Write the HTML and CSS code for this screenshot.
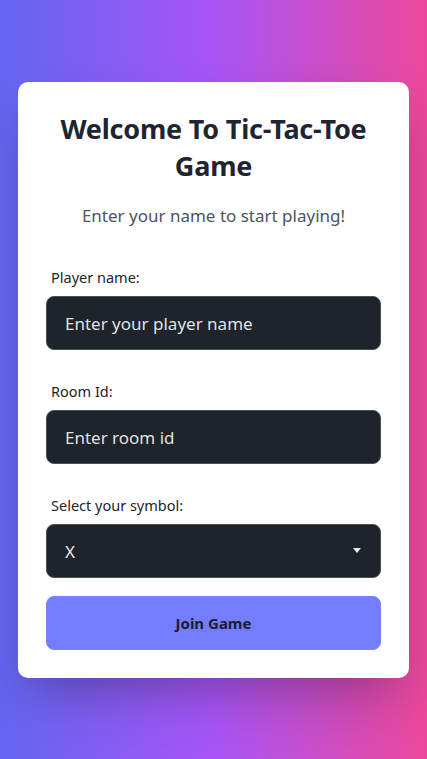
FILE: index.html
```html
<!DOCTYPE html>
<html lang="en">
<head>
<meta charset="utf-8">
<title>Tic-Tac-Toe</title>
<link rel="stylesheet" href="styles.css">
</head>
<body>
<main class="page">
  <section class="card">
    <h1 class="title">Welcome To Tic-Tac-Toe Game</h1>
    <p class="subtitle">Enter your name to start playing!</p>
    <form class="form">
      <label class="label" for="player">Player name:</label>
      <input class="field" id="player" type="text" placeholder="Enter your player name">
      <label class="label" for="room">Room Id:</label>
      <input class="field" id="room" type="text" placeholder="Enter room id">
      <label class="label" for="symbol">Select your symbol:</label>
      <div class="select-wrap">
        <select class="field select" id="symbol">
          <option>X</option>
          <option>O</option>
        </select>
      </div>
      <button class="btn" type="button">Join Game</button>
    </form>
  </section>
</main>
</body>
</html>
```
FILE: styles.css
```css
* { box-sizing: border-box; }
html, body { margin: 0; padding: 0; }
body {
  font-family: "Noto Sans", "Open Sans", sans-serif;
  min-height: 759px;
  background: linear-gradient(to right, #6366f1, #a855f7, #ec4899);
}
.page {
  padding: 82px 18px 0;
}
.card {
  background: #fff;
  border-radius: 10px;
  padding: 28px;
  box-shadow: 0 25px 50px -12px rgba(0, 0, 0, 0.3);
}
.title {
  margin: 0 0 18px;
  text-align: center;
  font-size: 27px;
  line-height: 37px;
  letter-spacing: -0.2px;
  font-weight: 700;
  color: #1f2530;
}
.subtitle {
  margin: 0;
  text-align: center;
  font-size: 17px;
  line-height: 27px;
  color: #4b5563;
}
.form {
  display: flex;
  flex-direction: column;
  margin-top: 37px;
}
.label {
  font-size: 14.5px;
  line-height: 22px;
  color: #212529;
  padding-left: 5px;
  margin-bottom: 8px;
}
.field {
  display: block;
  width: 100%;
  height: 54px;
  margin: 0 0 30px;
  padding: 0 18px;
  border: 1px solid #495057;
  border-radius: 8px;
  background: #1f232a;
  color: #e9ecef;
  font-family: inherit;
  font-size: 17px;
  outline: none;
}
.field::placeholder { color: #dee2e6; opacity: 1; }
.select-wrap { position: relative; }
.select {
  appearance: none;
  -webkit-appearance: none;
  margin-bottom: 18px;
}
.select-wrap::after {
  content: "";
  position: absolute;
  right: 20px;
  top: 24px;
  border-left: 4px solid transparent;
  border-right: 4px solid transparent;
  border-top: 5px solid #e9ecef;
  pointer-events: none;
}
.btn {
  height: 54px;
  border: 1px solid #7c84ff;
  border-radius: 8px;
  background: #757dff;
  color: #1a1d2e;
  font-family: inherit;
  font-size: 15px;
  font-weight: 700;
}
```
